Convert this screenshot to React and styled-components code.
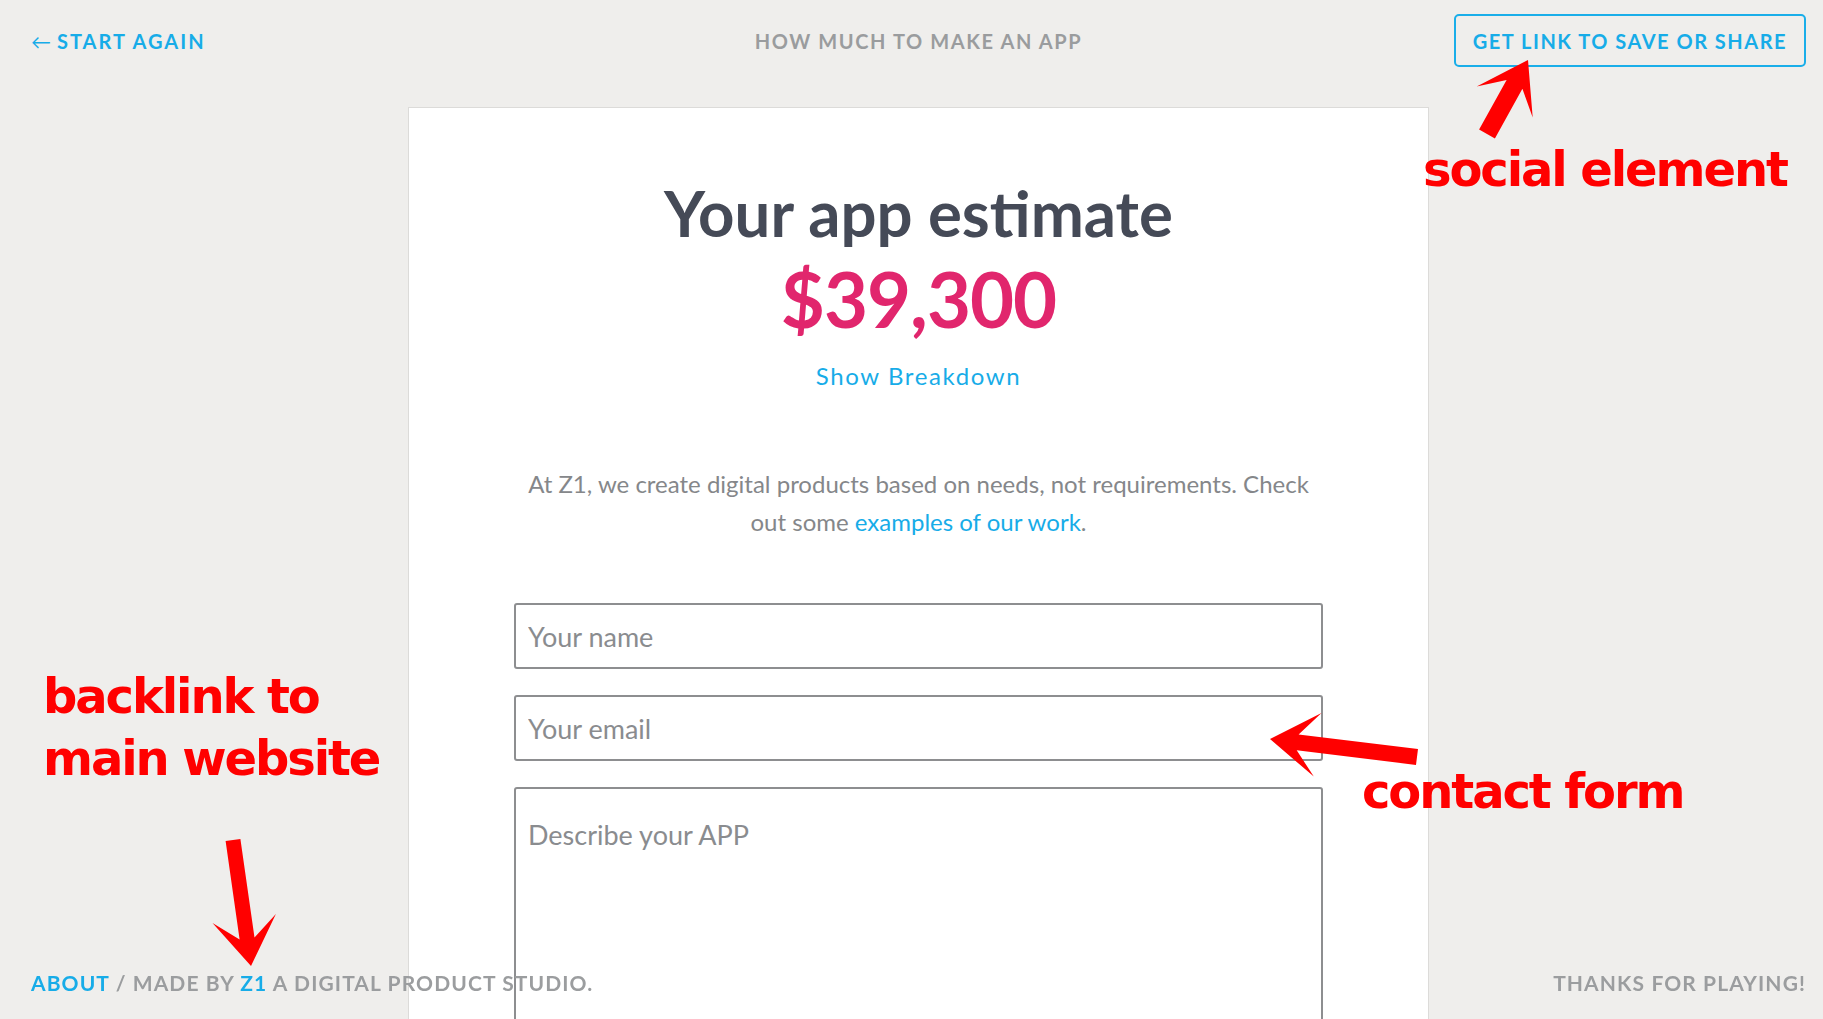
import React from "react"
import styled, { createGlobalStyle } from "styled-components"

const GlobalStyle = createGlobalStyle`
  html, body {
    margin: 0;
    padding: 0;
    background: #efeeec;
    font-family: Lato, "Open Sans", sans-serif;
    overflow: hidden;
  }
  * {
    box-sizing: border-box;
  }
`

const Page = styled.div`
  position: relative;
  min-height: 100vh;
  padding: 14px 17px 0 31px;
`

const Header = styled.header`
  display: grid;
  grid-template-columns: 1fr auto 1fr;
  align-items: center;
  height: 53px;
`

const Caps = styled.a`
  font-size: 20px;
  font-weight: 700;
  letter-spacing: 1.6px;
  text-transform: uppercase;
  text-decoration: none;
  color: ${props => (props.muted ? "#9a9c9e" : "#17ace8")};
`

const BackLink = styled(Caps)`
  justify-self: start;
  letter-spacing: 2px;
  .arrow {
    font-weight: 400;
    margin-right: 6px;
    letter-spacing: 0;
  }
`

const ShareButton = styled(Caps)`
  justify-self: end;
  display: flex;
  align-items: center;
  height: 53px;
  padding: 0 17px;
  border: 2px solid #1aaee9;
  border-radius: 5px;
  letter-spacing: 1.5px;
`

const Card = styled.main`
  width: 1021px;
  margin: 40px auto 0;
  padding: 67px 105px 80px;
  background: #fff;
  border: 1px solid #dcdbd9;
  border-bottom: none;
  text-align: center;
`

const Title = styled.h1`
  margin: 0;
  font-size: 63.5px;
  line-height: 1.2;
  font-weight: 700;
  color: #454a57;
`

const Price = styled.div`
  margin-top: 2px;
  font-size: 76px;
  line-height: 1.2;
  font-weight: 700;
  color: #e1266d;
  letter-spacing: -1px;
`

const Breakdown = styled.a`
  display: inline-block;
  margin-top: 18px;
  font-size: 24px;
  line-height: 1.2;
  letter-spacing: 1.6px;
  color: #17ace8;
  text-decoration: none;
`

const Intro = styled.p`
  margin: 74px 0 0;
  font-size: 24px;
  line-height: 38px;
  color: #85878a;
  a {
    color: #17ace8;
    text-decoration: none;
  }
`

const Form = styled.form`
  display: flex;
  flex-direction: column;
  gap: 26px;
  margin-top: 62px;
`

const Field = styled.input`
  height: 66px;
  padding: 0 12px;
  border: 2px solid #8d8e90;
  border-radius: 3px;
  font-family: Lato, sans-serif;
  font-size: 27px;
  color: #444;
  &::placeholder {
    color: #8a8c8f;
  }
`

const Area = styled.textarea`
  height: 330px;
  padding: 26px 12px;
  border: 2px solid #8d8e90;
  border-radius: 3px;
  font-family: Lato, sans-serif;
  font-size: 27px;
  line-height: 1.5;
  resize: none;
  &::placeholder {
    color: #8a8c8f;
  }
`

const Footer = styled.footer`
  position: fixed;
  left: 0;
  right: 0;
  bottom: 0;
  display: flex;
  justify-content: space-between;
  padding: 0 17px 24px 31px;
  font-size: 21px;
  line-height: 1.2;
  font-weight: 700;
  letter-spacing: 1.1px;
  color: #9b9d9f;
  a {
    color: #17ace8;
    text-decoration: none;
  }
`

// red notes drawn on top of the screenshot
const Note = styled.div`
  position: absolute;
  left: ${props => props.x}px;
  top: ${props => props.y}px;
  font-family: "DejaVu Sans", Verdana, sans-serif;
  font-weight: 700;
  font-size: 48px;
  line-height: 62px;
  letter-spacing: -2.1px;
  color: #ff0000;
  white-space: nowrap;
  pointer-events: none;
`

const ArrowLayer = styled.svg`
  position: absolute;
  left: 0;
  top: 0;
  pointer-events: none;
`

const arrows = [
  { from: [1487, 134], to: [1528, 60], w: 9 },
  { from: [233, 840], to: [251, 966], w: 7.5 },
  { from: [1417, 757], to: [1270, 739], w: 8 }
]

const arrowPoints = ({ from, to, w }) => {
  const dx = to[0] - from[0]
  const dy = to[1] - from[1]
  const len = Math.hypot(dx, dy)
  const ux = dx / len
  const uy = dy / len
  const nx = -uy
  const ny = ux
  const head = 48
  const wing = 32
  const neck = head * 0.58
  const at = (d, s) => [to[0] - ux * d + nx * s, to[1] - uy * d + ny * s]
  const pts = [
    [from[0] + nx * w, from[1] + ny * w],
    at(neck, w),
    at(head, wing),
    to,
    at(head, -wing),
    at(neck, -w),
    [from[0] - nx * w, from[1] - ny * w]
  ]
  return pts.map(p => p.map(v => v.toFixed(1)).join(",")).join(" ")
}

const App = () => {
  return (
    <Page>
      <GlobalStyle />
      <Header>
        <BackLink href="#">
          <span className="arrow">←</span>START AGAIN
        </BackLink>
        <Caps muted href="#">How much to make an app</Caps>
        <ShareButton href="#">Get link to save or share</ShareButton>
      </Header>

      <Card>
        <Title>Your app estimate</Title>
        <Price>$39,300</Price>
        <Breakdown href="#">Show Breakdown</Breakdown>
        <Intro>
          At Z1, we create digital products based on needs, not requirements. Check out some{" "}
          <a href="#">examples of our work</a>.
        </Intro>
        <Form onSubmit={e => e.preventDefault()}>
          <Field type="text" placeholder="Your name" />
          <Field type="email" placeholder="Your email" />
          <Area placeholder="Describe your APP" />
        </Form>
      </Card>

      <Footer>
        <span>
          <a href="#">ABOUT</a> / MADE BY <a href="#">Z1</a> A DIGITAL PRODUCT STUDIO.
        </span>
        <span>THANKS FOR PLAYING!</span>
      </Footer>

      <ArrowLayer width="1823" height="1019" viewBox="0 0 1823 1019">
        {arrows.map((a, i) => (
          <polygon key={i} points={arrowPoints(a)} fill="#ff0000" />
        ))}
      </ArrowLayer>
      <Note x={1423} y={138}>social element</Note>
      <Note x={43} y={665}>
        backlink to
        <br />
        main website
      </Note>
      <Note x={1362} y={760}>contact form</Note>
    </Page>
  )
}

export default App
